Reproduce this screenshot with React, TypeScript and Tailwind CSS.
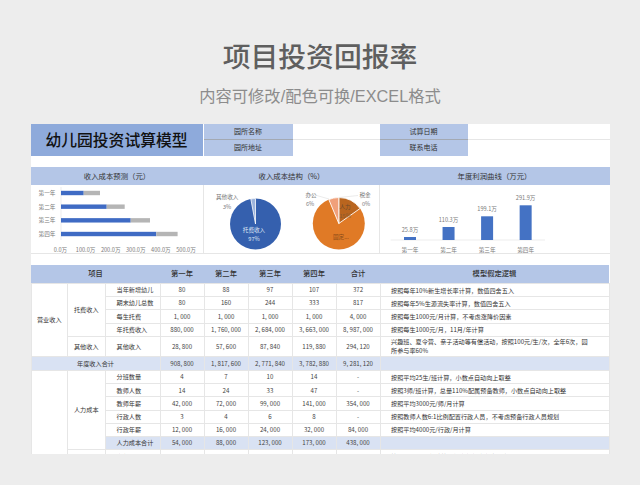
const font = { fontFamily: '"Noto Sans CJK SC", "Liberation Sans", sans-serif' };
const subtitleFont = { fontFamily: '"Liberation Sans", "Noto Sans CJK SC", sans-serif' };

function Cell({ children, className = "", rowSpan, colSpan }: { children?: React.ReactNode; className?: string; rowSpan?: number; colSpan?: number }) {
  return (
    <td rowSpan={rowSpan} colSpan={colSpan} className={`border border-[#e6e6e6] p-0 text-center align-middle ${className}`}>
      {children}
    </td>
  );
}

function Label({ children, bg = "" }: { children?: React.ReactNode; bg?: string }) {
  return <td className={`border border-[#e6e6e6] p-0 pl-[11px] text-left align-middle ${bg}`}>{children}</td>;
}

const nums = (v: string[], bg = "") =>
  v.map((x, i) => (
    <td key={i} className={`border border-[#e6e6e6] p-0 text-center align-middle text-[#444] ${bg}`}>
      {x}
    </td>
  ));

function Note({ children, bg = "" }: { children?: React.ReactNode; bg?: string }) {
  return <td className={`border border-[#e6e6e6] p-0 pl-[10.5px] pr-[20px] text-left align-middle leading-[9px] ${bg}`}>{children}</td>;
}

function BarChart() {
  const rows = [
    ["第一年", 22.7, 16.3],
    ["第二年", 45.7, 18],
    ["第三年", 69.7, 19.3],
    ["第四年", 95.3, 21.3],
  ] as const;
  return (
    <svg viewBox="0 0 172 69" className="h-[69px] w-[172px]" fontSize="5.6" fill="#7a7a7a">
      <line x1="30" y1="2" x2="30" y2="55" stroke="#d9d9d9" strokeWidth="0.5" />
      {rows.map(([n, a, b], i) => {
        const c = 8 + i * 13.67;
        return (
          <g key={n}>
            <text x="16" y={c + 2} textAnchor="middle">{n}</text>
            <rect x="30" y={c - 2.2} width={a} height="4.4" fill="#3f6bc4" />
            <rect x={30 + a} y={c - 2.2} width={b} height="4.4" fill="#b5b5b5" />
          </g>
        );
      })}
      {["0.0万", "100.0万", "200.0万", "300.0万", "400.0万", "500.0万"].map((t, i) => (
        <text key={t} x={29.5 + i * 25.1} y="66.5" textAnchor="middle">{t}</text>
      ))}
    </svg>
  );
}

function PieCharts() {
  return (
    <svg viewBox="0 0 175 69" className="h-[69px] w-[175px]" fontSize="5.6" fill="#777">
      <circle cx="51.5" cy="39" r="25.5" fill="#3560ae" />
      <path d="M51.5 39 L46.8 13.9 A25.5 25.5 0 0 1 51.5 13.5 Z" fill="#9db4dc" stroke="#fff" strokeWidth="0.8" />
      <text x="12" y="14">其他收入</text>
      <text x="19" y="23.5">3%</text>
      <text x="50" y="46.5" textAnchor="middle" fill="#dfe6f3">托费收入</text>
      <text x="50" y="56" textAnchor="middle" fill="#dfe6f3">97%</text>

      <circle cx="134.8" cy="38.5" r="26" fill="#e07a26" />
      <path d="M134.8 38.5 L134.8 12.5 A26 26 0 0 1 156 23.5 Z" fill="#b9651f" stroke="#fff" strokeWidth="0.9" />
      <path d="M134.8 38.5 L124.8 14.5 A26 26 0 0 1 134.8 12.5 Z" fill="#f0a07a" stroke="#fff" strokeWidth="0.9" />
      <line x1="111" y1="10" x2="125" y2="14" stroke="#ccc" strokeWidth="0.4" />
      <line x1="135" y1="12.5" x2="154" y2="10.5" stroke="#ccc" strokeWidth="0.4" />
      <text x="101.5" y="12">办公</text>
      <text x="102" y="21">6%</text>
      <text x="155.5" y="12">税金</text>
      <text x="158" y="21">0%</text>
      <text x="135.5" y="23.5" fill="#6e4a2c">人力</text>
      <text x="135.5" y="32.5" fill="#8a5a30">15%</text>
      <text x="129" y="54" fill="#8a4b18">固定...</text>
    </svg>
  );
}

function ColumnChart() {
  const cols = [
    ["25.8万", "第一年", 3],
    ["110.3万", "第二年", 13],
    ["199.1万", "第三年", 23.7],
    ["291.9万", "第四年", 34.7],
  ] as const;
  return (
    <svg viewBox="0 0 230 69" className="h-[69px] w-[230px]" fontSize="5.6" fill="#7a7a7a">
      <line x1="10.7" y1="55" x2="165" y2="55" stroke="#d9d9d9" strokeWidth="0.5" />
      {cols.map(([v, n, h], i) => {
        const cx = 30 + i * 38.55;
        return (
          <g key={n}>
            <rect x={cx - 6} y={55 - h} width="12" height={h} fill="#4472c4" />
            <text x={cx} y={55 - h - 5} textAnchor="middle">{v}</text>
            <text x={cx} y="66.5" textAnchor="middle">{n}</text>
          </g>
        );
      })}
    </svg>
  );
}

export default function App() {
  return (
    <div className="h-[485px] w-[640px] overflow-hidden bg-[#ededed]" style={font}>
      <h1 className="pt-[35px] text-center text-[27.8px] font-medium leading-[40px] text-[#5f5f5f]">项目投资回报率</h1>
      <p className="mt-[9px] text-center text-[16.3px] leading-[24px] text-[#8c8c8c]" style={subtitleFont}>内容可修改/配色可换/EXCEL格式</p>

      <div className="ml-[30.5px] mt-[16px] h-[330px] w-[579px] overflow-hidden bg-white">
        <div className="grid h-[31.5px] grid-cols-[173px_89px_87px_88px_142px] grid-rows-2 text-center text-[7px] text-[#333]">
          <div className="row-span-2 flex items-center justify-center border-r border-white bg-[#8eaadb] text-[15.8px] font-medium text-[#111]">幼儿园投资试算模型</div>
          <div className="flex items-center justify-center border-b border-[#a3a9b3] bg-[#b4c6e7]">园所名称</div>
          <div className="border-b border-[#e6e6e6]" />
          <div className="flex items-center justify-center border-b border-[#a3a9b3] bg-[#b4c6e7]">试算日期</div>
          <div className="border-b border-[#e6e6e6]" />
          <div className="flex items-center justify-center bg-[#b4c6e7]">园所地址</div>
          <div />
          <div className="flex items-center justify-center bg-[#b4c6e7]">联系电话</div>
          <div />
        </div>

        <div className="mt-[11px] flex h-[18px] items-center bg-[#b4c6e7] text-[7.4px] text-[#333]">
          <div className="w-[173px] text-center">收入成本预测（元）</div>
          <div className="w-[176px] text-center">收入成本结构（%）</div>
          <div className="flex-1 text-center">年度利润曲线（万元）</div>
        </div>

        <div className="flex h-[69.5px] border-b border-[#e6e6e6]">
          <div className="w-[173px] border-r border-[#e6e6e6]"><BarChart /></div>
          <div className="w-[176px] border-r border-[#e6e6e6]"><PieCharts /></div>
          <div className="flex-1"><ColumnChart /></div>
        </div>

        <table className="mt-[10.5px] w-[579px] table-fixed border-collapse text-[6.15px] text-[#333]">
          <colgroup>
            <col className="w-[36.5px]" />
            <col className="w-[37.5px]" />
            <col className="w-[55px]" />
            <col className="w-[44px]" />
            <col className="w-[44px]" />
            <col className="w-[44px]" />
            <col className="w-[44px]" />
            <col className="w-[44px]" />
            <col />
          </colgroup>
          <tbody>
            <tr className="h-[19px] bg-[#b4c6e7] text-center text-[7.3px] font-medium">
              <td colSpan={3}>项目</td>
              <td>第一年</td>
              <td>第二年</td>
              <td>第三年</td>
              <td>第四年</td>
              <td>合计</td>
              <td>模型假定逻辑</td>
            </tr>
            <tr className="h-[13px]">
              <Cell rowSpan={5}>营业收入</Cell>
              <Cell rowSpan={4}>托费收入</Cell>
              <Label>当年新增幼儿</Label>
              {nums(["80", "88", "97", "107", "372"])}
              <Note>按照每年10%新生增长率计算，数值四舍五入</Note>
            </tr>
            <tr className="h-[13px]">
              <Label>期末幼儿总数</Label>
              {nums(["80", "160", "244", "333", "817"])}
              <Note>按照每年5%生源流失率计算，数值四舍五入</Note>
            </tr>
            <tr className="h-[13.5px]">
              <Label>每生托费</Label>
              {nums(["1, 000", "1, 000", "1, 000", "1, 000", "4, 000"])}
              <Note>按照每生1000元/月计算，不考虑涨降价因素</Note>
            </tr>
            <tr className="h-[13px]">
              <Label>年托费收入</Label>
              {nums(["880, 000", "1, 760, 000", "2, 684, 000", "3, 663, 000", "8, 987, 000"])}
              <Note>按照每生1000元/月，11月/年计算</Note>
            </tr>
            <tr className="h-[20.5px]">
              <Cell>其他收入</Cell>
              <Label>其他收入</Label>
              {nums(["28, 800", "57, 600", "87, 840", "119, 880", "294, 120"])}
              <Note>兴趣班、夏令营、亲子活动等有偿活动，按照100元/生/次，全年6次，园所参与率60%</Note>
            </tr>
            <tr className="h-[14px] bg-[#d9e2f3]">
              <Cell colSpan={3}>年度收入合计</Cell>
              {nums(["908, 800", "1, 817, 600", "2, 771, 840", "3, 782, 880", "9, 281, 120"])}
              <Note />
            </tr>
            <tr className="h-[13.2px]">
              <Cell rowSpan={8} />
              <Cell rowSpan={6}>人力成本</Cell>
              <Label>分班数量</Label>
              {nums(["4", "7", "10", "14", "-"])}
              <Note>按照平均25生/班计算，小数点自动向上取整</Note>
            </tr>
            <tr className="h-[13.2px]">
              <Label>教师人数</Label>
              {nums(["14", "24", "33", "47", "-"])}
              <Note>按照3师/班计算，总量110%配属预备教师，小数点自动向上取整</Note>
            </tr>
            <tr className="h-[13.2px]">
              <Label>教师年薪</Label>
              {nums(["42, 000", "72, 000", "99, 000", "141, 000", "354, 000"])}
              <Note>按照平均3000元/师/月计算</Note>
            </tr>
            <tr className="h-[13.2px]">
              <Label>行政人数</Label>
              {nums(["3", "4", "6", "8", "-"])}
              <Note>按照教师人数6:1比例配置行政人员，不考虑预备行政人员规划</Note>
            </tr>
            <tr className="h-[13.2px]">
              <Label>行政年薪</Label>
              {nums(["12, 000", "16, 000", "24, 000", "32, 000", "84, 000"])}
              <Note>按照平均4000元/行政/月计算</Note>
            </tr>
            <tr className="h-[13.2px]">
              <Label bg="bg-[#d9e2f3]">人力成本合计</Label>
              {nums(["54, 000", "88, 000", "123, 000", "173, 000", "438, 000"], "bg-[#d9e2f3]")}
              <Note bg="bg-[#d9e2f3]" />
            </tr>
            <tr className="h-[13.2px]">
              <Cell rowSpan={2} />
              <Label>房租</Label>
              {nums(["60, 000", "60, 000", "60, 180", "67, 081", "248, 261"])}
              <Note>按照60000元/年计算，假定每年房租自动向上调</Note>
            </tr>
            <tr className="h-[13.2px]">
              <Label />
              {nums(["", "", "", "", ""])}
              <Note />
            </tr>
          </tbody>
        </table>
      </div>
    </div>
  );
}
